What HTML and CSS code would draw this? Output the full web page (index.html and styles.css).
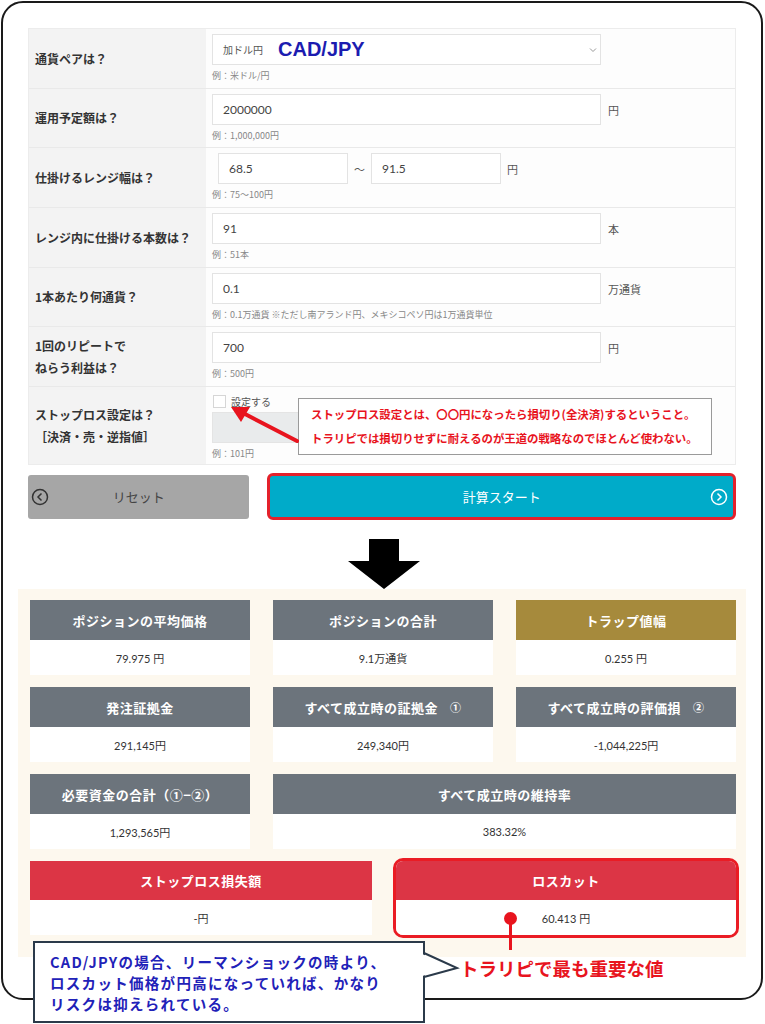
FILE: index.html
```html
<!DOCTYPE html>
<html lang="ja">
<head>
    <meta charset="utf-8">
    <title>トラリピ 計算ツール</title>
    <link rel="stylesheet" href="styles.css">
</head>
<body>
<div class="frame">
    <div class="form-table">
        <div class="form-row">
            <div class="label">通貨ペアは？</div>
            <div class="field">
                <div class="line">
                    <div class="input select">
                        <span class="select-text">加ドル円</span>
                        <span class="cad">CAD/JPY</span>
                        <svg class="chevron" width="8" height="6" viewBox="0 0 8 6"><path d="M1 1.5 L4 4.5 L7 1.5" fill="none" stroke="#999" stroke-width="1"/></svg>
                    </div>
                </div>
                <div class="hint">例：米ドル/円</div>
            </div>
        </div>
        <div class="form-row short-row">
            <div class="label">運用予定額は？</div>
            <div class="field">
                <div class="line">
                    <div class="input">2000000</div>
                    <span class="unit">円</span>
                </div>
                <div class="hint">例：1,000,000円</div>
            </div>
        </div>
        <div class="form-row">
            <div class="label">仕掛けるレンジ幅は？</div>
            <div class="field">
                <div class="line range">
                    <div class="input short">68.5</div>
                    <span class="unit">〜</span>
                    <div class="input short">91.5</div>
                    <span class="unit">円</span>
                </div>
                <div class="hint">例：75〜100円</div>
            </div>
        </div>
        <div class="form-row">
            <div class="label">レンジ内に仕掛ける本数は？</div>
            <div class="field">
                <div class="line">
                    <div class="input">91</div>
                    <span class="unit">本</span>
                </div>
                <div class="hint">例：51本</div>
            </div>
        </div>
        <div class="form-row short-row">
            <div class="label">1本あたり何通貨？</div>
            <div class="field">
                <div class="line">
                    <div class="input">0.1</div>
                    <span class="unit">万通貨</span>
                </div>
                <div class="hint">例：0.1万通貨 ※ただし南アランド円、メキシコペソ円は1万通貨単位</div>
            </div>
        </div>
        <div class="form-row">
            <div class="label">1回のリピートで<br>ねらう利益は？</div>
            <div class="field">
                <div class="line">
                    <div class="input">700</div>
                    <span class="unit">円</span>
                </div>
                <div class="hint">例：500円</div>
            </div>
        </div>
        <div class="form-row row-stop">
            <div class="label">ストップロス設定は？<br>［決済・売・逆指値］</div>
            <div class="field">
                <div class="check"><span class="box"></span>設定する</div>
                <div class="line">
                    <div class="input disabled"></div>
                </div>
                <div class="hint">例：101円</div>
            </div>
        </div>
    </div>

    <div class="buttons">
        <div class="btn btn-reset">
            <svg width="18" height="18" viewBox="0 0 18 18"><circle cx="9" cy="9" r="7.5" fill="none" stroke="#333" stroke-width="1.5"/><path d="M10.5 5.5 L7 9 L10.5 12.5" fill="none" stroke="#333" stroke-width="1.5"/></svg>
            <span class="btn-text">リセット</span>
            <span class="spacer"></span>
        </div>
        <div class="btn btn-start">
            <span class="spacer"></span>
            <span class="btn-text">計算スタート</span>
            <svg width="18" height="18" viewBox="0 0 18 18"><circle cx="9" cy="9" r="7.5" fill="none" stroke="#fff" stroke-width="1.5"/><path d="M7.5 5.5 L11 9 L7.5 12.5" fill="none" stroke="#fff" stroke-width="1.5"/></svg>
        </div>
    </div>

    <div class="down-arrow">
        <svg width="72" height="50" viewBox="0 0 72 50"><polygon points="21,0 51,0 51,22 72,22 36,50 0,22 21,22" fill="#000"/></svg>
    </div>

    <div class="results">
        <div class="cards">
            <div class="card">
                <div class="card-head">ポジションの平均価格</div>
                <div class="card-body">79.975 円</div>
            </div>
            <div class="card">
                <div class="card-head">ポジションの合計</div>
                <div class="card-body">9.1万通貨</div>
            </div>
            <div class="card gold">
                <div class="card-head">トラップ値幅</div>
                <div class="card-body">0.255 円</div>
            </div>
            <div class="card">
                <div class="card-head">発注証拠金</div>
                <div class="card-body">291,145円</div>
            </div>
            <div class="card">
                <div class="card-head">すべて成立時の証拠金<span class="num">①</span></div>
                <div class="card-body">249,340円</div>
            </div>
            <div class="card">
                <div class="card-head">すべて成立時の評価損<span class="num">②</span></div>
                <div class="card-body">-1,044,225円</div>
            </div>
            <div class="card">
                <div class="card-head">必要資金の合計（①−②）</div>
                <div class="card-body">1,293,565円</div>
            </div>
            <div class="card span2">
                <div class="card-head">すべて成立時の維持率</div>
                <div class="card-body">383.32%</div>
            </div>
        </div>
        <div class="cards-bottom">
            <div class="card red">
                <div class="card-head">ストップロス損失額</div>
                <div class="card-body">-円</div>
            </div>
            <div class="card red losscut">
                <div class="card-head">ロスカット</div>
                <div class="card-body">60.413 円</div>
            </div>
        </div>
    </div>
</div>

<!-- annotations drawn over the screenshot -->
<div class="note-stop">ストップロス設定とは、〇〇円になったら損切り(全決済)するということ。<br>トラリピでは損切りせずに耐えるのが王道の戦略なのでほとんど使わない。</div>
<svg class="note-arrow" width="80" height="50" viewBox="0 0 80 50">
    <line x1="72" y1="41" x2="20" y2="14" stroke="#e8141e" stroke-width="4" stroke-linecap="round"/>
    <polygon points="6,7 25,7 16,22" fill="#e8141e"/>
</svg>

<span class="dot"></span>
<span class="dot-line"></span>
<div class="note-important">トラリピで最も重要な値</div>

<div class="callout">
    <div>CAD/JPYの場合、リーマンショックの時より、</div>
    <div>ロスカット価格が円高になっていれば、かなり</div>
    <div>リスクは抑えられている。</div>
</div>
<svg class="callout-tip" width="38" height="30" viewBox="0 0 38 30">
    <polygon points="0,3 34,17 0,25" fill="#fff"/>
    <polyline points="2,2 35,17 2,26" fill="none" stroke="#2b3a4a" stroke-width="2"/>
</svg>
</body>
</html>
```

FILE: styles.css
```css
* {
    box-sizing: border-box;
}

body {
    margin: 0;
    font-family: "Noto Sans CJK JP", sans-serif;
    color: #333;
    background: #fff;
}

.frame {
    margin: 1px 0 0 1px;
    width: 762px;
    height: 999px;
    border: 2px solid #1a1a1a;
    border-radius: 22px;
    padding: 25px 25px 0 25px;
}

/* input table */
.form-table {
    border: 1px solid #ececec;
}

.form-row {
    display: flex;
    height: 60px;
    border-bottom: 1px solid #e9e9e9;
}

.form-row.short-row {
    height: 59px;
}

.form-row.row-stop {
    height: 77px;
    border-bottom: none;
}

.label {
    width: 177px;
    background: #f3f3f3;
    display: flex;
    align-items: center;
    padding-left: 6px;
    font-size: 12px;
    font-weight: bold;
    line-height: 22px;
    color: #333;
}

.field {
    flex: 1;
    background: #fdfdfd;
    padding: 5px 0 0 6px;
}

.line {
    display: flex;
    align-items: center;
    gap: 7px;
    height: 31px;
}

.line.range {
    gap: 6px;
    padding-left: 6px;
}

.input {
    width: 389px;
    height: 31px;
    border: 1px solid #e3e3e3;
    background: #fff;
    padding-left: 10px;
    font-family: "Lato", "Noto Sans CJK JP", sans-serif;
    font-size: 12px;
    color: #444;
    display: flex;
    align-items: center;
}

.input.short {
    width: 130px;
}

.input.disabled {
    background: #e9ebec;
    border-color: #e4e4e4;
}

.select {
    position: relative;
}

.select-text {
    font-size: 10px;
    color: #555;
}

.cad {
    margin-left: 15px;
    font-family: "Liberation Sans", sans-serif;
    font-size: 20px;
    font-weight: bold;
    color: #1c1cb0;
}

.chevron {
    position: absolute;
    right: 3px;
    top: 12px;
}

.unit {
    font-size: 11px;
    color: #555;
}

.hint {
    font-size: 9px;
    color: #888;
    margin-top: 4px;
    line-height: 14px;
}

.check {
    display: flex;
    align-items: center;
    gap: 5px;
    font-size: 10px;
    color: #555;
    height: 14px;
    margin: 2px 0 4px 1px;
}

.check .box {
    width: 13px;
    height: 13px;
    border: 1px solid #d6d6d6;
    background: #fff;
}

/* buttons */
.buttons {
    display: flex;
    align-items: center;
    gap: 18px;
    margin-top: 8px;
    height: 47px;
}

.btn {
    display: flex;
    align-items: center;
    font-size: 13px;
}

.btn-text {
    flex: 1;
    text-align: center;
}

.spacer {
    width: 18px;
}

.btn-reset {
    width: 222px;
    height: 44px;
    background: #a6a6a6;
    border-radius: 3px;
    color: #444;
    padding: 0 3px 0 3px;
}

.btn-start {
    width: 470px;
    height: 47px;
    background: #00abc9;
    border: 3px solid #e4212b;
    border-radius: 6px;
    color: #fff;
    padding: 0 5px;
}

.down-arrow {
    display: flex;
    justify-content: center;
    padding: 19px 0 0 0;
    height: 69px;
}

.down-arrow svg {
    margin-left: 3px;
}

/* result cards */
.results {
    margin: 0 -10px;
    background: #fdf8ee;
    padding: 11px 10px 19px 12px;
}

.cards {
    display: grid;
    grid-template-columns: 220px 220px 220px;
    gap: 12px 23px;
}

.card.span2 {
    grid-column: span 2;
}

.card-head {
    height: 40px;
    background: #6c747c;
    color: #fff;
    font-size: 13px;
    font-weight: bold;
    letter-spacing: 0.5px;
    display: flex;
    align-items: center;
    justify-content: center;
}

.card-head .num {
    margin-left: 12px;
    font-size: 11px;
}

.card.gold .card-head {
    background: #a68a3c;
}

.card.red .card-head {
    background: #dc3545;
    height: 39px;
}

.card-body {
    height: 35px;
    background: #fff;
    font-family: "Lato", "Noto Sans CJK JP", sans-serif;
    font-size: 11px;
    color: #333;
    display: flex;
    align-items: center;
    justify-content: center;
}

.cards-bottom {
    display: grid;
    grid-template-columns: 342px 346px;
    column-gap: 21px;
    margin-top: 12px;
    align-items: start;
}

.card.losscut {
    margin-top: -3px;
    border: 3px solid #ea1c24;
    border-radius: 10px;
    overflow: hidden;
}

/* annotations */
.note-stop {
    position: absolute;
    left: 298px;
    top: 398px;
    width: 414px;
    height: 57px;
    background: #fff;
    border: 1px solid #9a9a9a;
    color: #e8141e;
    font-size: 11.4px;
    font-weight: bold;
    line-height: 24px;
    padding: 3px 0 0 12px;
    white-space: nowrap;
}

.note-arrow {
    position: absolute;
    left: 225px;
    top: 400px;
}

.dot {
    position: absolute;
    left: 504px;
    top: 912px;
    width: 13px;
    height: 13px;
    border-radius: 50%;
    background: #e8141e;
}

.dot-line {
    position: absolute;
    left: 509px;
    top: 920px;
    width: 3px;
    height: 30px;
    background: #e8141e;
}

.note-important {
    position: absolute;
    left: 460px;
    top: 955px;
    font-size: 18.5px;
    font-weight: bold;
    line-height: 26px;
    color: #e8141e;
    white-space: nowrap;
}

.callout {
    position: absolute;
    left: 33px;
    top: 941px;
    width: 392px;
    height: 82px;
    background: #fff;
    border: 2px solid #2b3a4a;
    color: #1f22b8;
    font-size: 14.5px;
    letter-spacing: 1.3px;
    font-weight: bold;
    line-height: 21px;
    padding: 8px 0 0 15px;
    white-space: nowrap;
}

.callout-tip {
    position: absolute;
    left: 422px;
    top: 951px;
}
```
